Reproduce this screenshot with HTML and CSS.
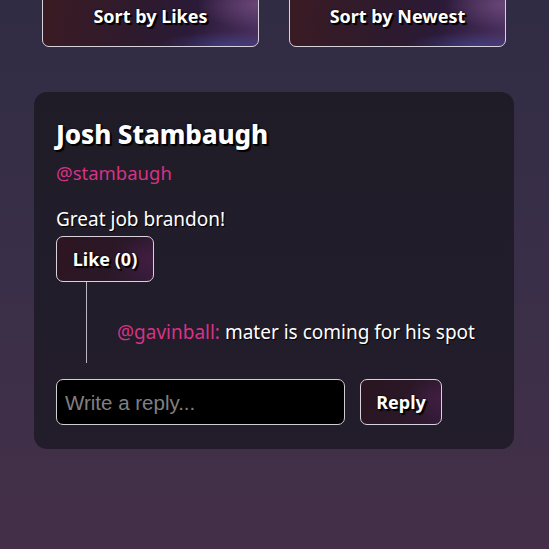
FILE: index.html
```html
<!DOCTYPE html>
<html>
<head>
<meta charset="utf-8">
<link rel="stylesheet" href="styles.css">
</head>
<body>
<div class="page">
  <div class="sort-row">
    <button class="btn sort-btn">Sort by Likes</button>
    <button class="btn sort-btn">Sort by Newest</button>
  </div>
  <div class="card">
    <h2 class="name">Josh Stambaugh</h2>
    <div class="handle">@stambaugh</div>
    <p class="comment">Great job brandon!</p>
    <div class="like-row"><button class="btn like-btn">Like (0)</button></div>
    <div class="replies">
      <div class="reply"><span class="reply-user">@gavinball:</span> <span class="reply-text">mater is coming for his spot</span></div>
    </div>
    <div class="reply-form">
      <input class="reply-input" type="text" placeholder="Write a reply...">
      <button class="btn reply-btn">Reply</button>
    </div>
  </div>
</div>
</body>
</html>
```
FILE: styles.css
```css
html, body {
  margin: 0;
  padding: 0;
  height: 100%;
}
body {
  background: linear-gradient(180deg, #302c44 0%, #3a2f48 50%, #452f48 100%);
  font-family: "Noto Sans", "Open Sans", sans-serif;
  color: #fff;
  overflow: hidden;
}
.page {
  display: flex;
  flex-direction: column;
  align-items: center;
}
.sort-row {
  display: flex;
  gap: 30px;
  margin-top: -14px;
  margin-left: -1px;
}
.btn {
  font-family: "Noto Sans", "Open Sans", sans-serif;
  font-weight: 700;
  color: #fff;
  font-size: 18px;
  border: 1px solid #d8d2dc;
  border-radius: 7px;
  cursor: pointer;
  text-shadow: 2px 2px 1px #000, 0 0 2px #000;
  background:
    radial-gradient(ellipse 45% 35% at 85% 100%, rgba(70, 80, 160, 0.55), transparent 70%),
    radial-gradient(ellipse 40% 60% at 100% 30%, rgba(120, 80, 130, 0.7), transparent 70%),
    linear-gradient(100deg, #3a1b22 0%, #2e1a2e 45%, #2b1a38 70%, #4a3060 100%);
}
.sort-btn {
  width: 217px;
  height: 61px;
  padding: 0;
  padding-bottom: 2px;
}
.card {
  margin-top: 45px;
  margin-right: 1px;
  width: 480px;
  box-sizing: border-box;
  background: linear-gradient(180deg, #1f1c28 0%, #231d2b 100%);
  border-radius: 13px;
  padding: 26px 22px 24px;
}
.name {
  margin: 0;
  font-size: 26px;
  line-height: 32px;
  font-weight: 800;
  letter-spacing: -0.1px;
  text-shadow: 2px 2px 1px #000, 0 0 2px #000, 1px 1px 0 #000;
}
.handle {
  color: #d63384;
  font-size: 18.5px;
  line-height: 24px;
  margin-top: 11px;
  font-weight: 400;
}
.comment {
  margin: 22px 0 0;
  font-size: 19px;
  line-height: 24px;
  text-shadow: 1px 1px 1px #000;
}
.like-row {
  display: flex;
  margin-top: 5px;
}
.like-btn {
  height: 46px;
  width: 98px;
  padding: 0;
  font-size: 18px;
  background:
    radial-gradient(ellipse 60% 70% at 100% 50%, rgba(70, 30, 70, 0.8), transparent 75%),
    linear-gradient(120deg, #2e1520 0%, #2a1828 60%, #351c3a 100%);
}
.replies {
  margin-left: 30px;
  border-left: 1px solid #bbb6c0;
  padding: 37px 0 17px 30px;
}
.reply {
  font-size: 19px;
  line-height: 27px;
}
.reply-user {
  color: #d63384;
  font-weight: 400;
}
.reply-text {
  text-shadow: 1px 1px 1px #000;
}
.reply-form {
  display: flex;
  gap: 15px;
  margin-top: 16px;
}
.reply-input {
  width: 289px;
  height: 46px;
  box-sizing: border-box;
  background: #000;
  border: 1px solid #cfcfd3;
  border-radius: 7px;
  color: #fff;
  font-family: "Liberation Sans", "Inter", sans-serif;
  font-size: 20.5px;
  padding: 2px 8px 0;
  outline: none;
}
.reply-input::placeholder {
  color: #808080;
}
.reply-btn {
  width: 82px;
  height: 46px;
  padding: 0;
  background:
    radial-gradient(ellipse 60% 70% at 100% 40%, rgba(70, 30, 70, 0.8), transparent 75%),
    linear-gradient(120deg, #2a1520 0%, #2a1828 60%, #341b3a 100%);
}
```
